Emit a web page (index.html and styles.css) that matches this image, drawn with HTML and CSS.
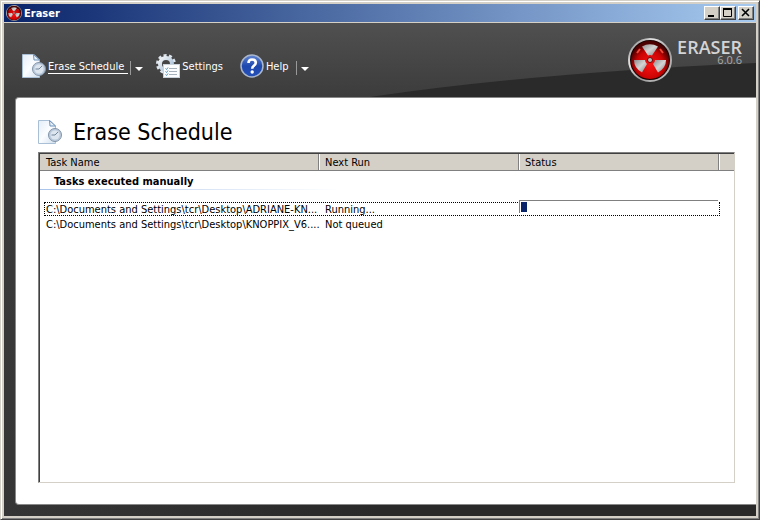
FILE: index.html
```html
<!DOCTYPE html>
<html lang="en">
<head>
  <meta charset="UTF-8" />
  <meta name="viewport" content="width=device-width, initial-scale=1.0"/>
  <title>Eraser</title>
  <link rel="stylesheet" href="styles.css">
</head>
<body>

  <svg class="defs" width="0" height="0" aria-hidden="true">
    <defs>
      <radialGradient id="red" cx="50%" cy="62%" r="55%">
        <stop offset="0" stop-color="#f81414"/>
        <stop offset="0.65" stop-color="#cc0404"/>
        <stop offset="1" stop-color="#4c0000"/>
      </radialGradient>
      <linearGradient id="chrome" x1="0" y1="0" x2="1" y2="1">
        <stop offset="0" stop-color="#777"/>
        <stop offset="0.3" stop-color="#e4e4e4"/>
        <stop offset="0.6" stop-color="#999"/>
        <stop offset="1" stop-color="#ccc"/>
      </linearGradient>
      <linearGradient id="blade" x1="0" y1="0" x2="1" y2="1">
        <stop offset="0" stop-color="#8c8c8c"/>
        <stop offset="0.5" stop-color="#d4d4d4"/>
        <stop offset="1" stop-color="#808080"/>
      </linearGradient>
      <linearGradient id="paper" x1="0" y1="0" x2="1" y2="1">
        <stop offset="0" stop-color="#e4edf7"/>
        <stop offset="0.5" stop-color="#fbfdff"/>
        <stop offset="1" stop-color="#cfdeee"/>
      </linearGradient>
      <linearGradient id="blue" x1="0" y1="0" x2="0" y2="1">
        <stop offset="0" stop-color="#6286d2"/>
        <stop offset="0.5" stop-color="#1f48ae"/>
        <stop offset="1" stop-color="#2450b8"/>
      </linearGradient>
      <linearGradient id="steel" x1="0" y1="0" x2="1" y2="1">
        <stop offset="0" stop-color="#f2f5f8"/>
        <stop offset="1" stop-color="#9db8d4"/>
      </linearGradient>
      <symbol id="logo" viewBox="0 0 44 44">
        <circle cx="22" cy="22" r="21" fill="#1c0000" stroke="url(#chrome)" stroke-width="2"/>
        <circle cx="22" cy="22" r="19" fill="url(#red)"/>
        <g fill="url(#blade)">
          <path d="M20 17.500 L14 8.500 Q22 4 30 8.500 L24 17.500 Q22 16.500 20 17.500Z"/>
          <path d="M17 22 L6 22 Q6 30 14 34.500 L19 26 Q17 24.500 17 22Z"/>
          <path d="M27 22 L38 22 Q38 30 30 34.500 L25 26 Q27 24.500 27 22Z"/>
        </g>
        <circle cx="22" cy="22" r="2.500" fill="#bbb" stroke="#700" stroke-width="1"/>
        <path d="M9 15 L12 11 M32 11 L35 15" stroke="#f04838" stroke-width="2"/>
      </symbol>
      <symbol id="page" viewBox="0 0 24 24">
        <path d="M0.500 0.500 H12 L17.500 6 V23.500 H0.500 Z" fill="url(#paper)" stroke="#a9bfd6"/>
        <path d="M11.500 0.500 L12 6 H17.500 Z" fill="#e8f0f8" stroke="#6f93bb"/>
        <circle cx="17" cy="15" r="6.500" fill="#bccbdc" stroke="#8294a8"/>
        <circle cx="17" cy="15" r="4.500" fill="#dde6ee"/>
        <path d="M17 15 L20 12 M17 15 H13.500" stroke="#71859b" fill="none"/>
      </symbol>
    </defs>
  </svg>

  <div class="window">
    <header class="titlebar">
      <svg class="title-icon"><use href="#logo"/></svg>
      <span class="title">Eraser</span>
      <div class="window-buttons">
        <button type="button" aria-label="Minimize"><svg width="12" height="10"><path d="M2 8h6" stroke="#000" stroke-width="2"/></svg></button>
        <button type="button" aria-label="Maximize"><svg width="12" height="10"><path d="M1.500 0v8.500h8v-8.500" fill="none" stroke="#000"/><path d="M1 1h9" stroke="#000" stroke-width="2"/></svg></button>
        <button type="button" class="close" aria-label="Close"><svg width="12" height="10"><path d="M2 1l7 7M9 1l-7 7" stroke="#000" stroke-width="1.600"/></svg></button>
      </div>
    </header>

    <div class="client">
      <svg class="swoosh" viewBox="0 0 752 74" preserveAspectRatio="none" aria-hidden="true">
        <path d="M366 74 Q530 50 752 40 V74 Z"/>
      </svg>

      <div class="toolbar">
        <nav class="tools">
          <button type="button" class="tool active">
            <svg class="icon"><use href="#page"/></svg>
            <span>Erase Schedule</span>
          </button>
          <button type="button" class="drop" aria-label="Erase Schedule menu"></button>
          <button type="button" class="tool">
            <svg class="icon" viewBox="0 0 24 24">
              <circle cx="10" cy="10" r="8.500" fill="none" stroke="#dde5ed" stroke-width="3" stroke-dasharray="3 2.340"/>
              <circle cx="10" cy="10" r="6" fill="none" stroke="url(#steel)" stroke-width="4"/>
              <rect x="7.500" y="10.500" width="16" height="13" fill="#fafcfd" stroke="#c9d2da"/>
              <path d="M13 14.500h8M13 17.500h8M13 20.500h8" stroke="#a5b0ba"/>
              <path d="M9.500 14.500l1 1 1.500-2M9.500 17.500l1 1 1.500-2M9.500 20.500l1 1 1.500-2" fill="none" stroke="#4f93cc"/>
            </svg>
            <span>Settings</span>
          </button>
          <button type="button" class="tool help">
            <svg class="icon" viewBox="0 0 24 24">
              <circle cx="12" cy="12" r="11" fill="url(#blue)" stroke="#a9b6cc" stroke-width="1.500"/>
              <path d="M8.500 9 Q8.500 5.500 12 5.500 Q15.800 5.500 15.800 8.800 Q15.800 10.600 13.700 11.800 Q12.200 12.700 12.200 14.800" fill="none" stroke="#fff" stroke-width="2.600"/>
              <circle cx="12.200" cy="18" r="1.700" fill="#fff"/>
            </svg>
            <span>Help</span>
          </button>
          <button type="button" class="drop" aria-label="Help menu"></button>
        </nav>
        <div class="brand">
          <svg class="brand-logo"><use href="#logo"/></svg>
          <div class="brand-text">
            <div class="brand-name">ERASER</div>
            <div class="brand-version">6.0.6</div>
          </div>
        </div>
      </div>

      <main class="panel">
        <div class="heading">
          <svg class="icon"><use href="#page"/></svg>
          <h1>Erase Schedule</h1>
        </div>

        <div class="list">
          <table>
            <colgroup>
              <col class="col-name"><col class="col-run"><col class="col-status"><col>
            </colgroup>
            <thead>
              <tr><th>Task Name</th><th>Next Run</th><th>Status</th><th></th></tr>
            </thead>
            <tbody>
              <tr class="group"><th colspan="4"><span>Tasks executed manually</span></th></tr>
              <tr class="selected">
                <td>C:\Documents and Settings\tcr\Desktop\ADRIANE-KN...</td>
                <td>Running...</td>
                <td class="status"><div class="progress" role="progressbar" aria-label="Progress" aria-valuenow="3"><div class="bar" style="width: 3%"></div></div></td>
                <td></td>
              </tr>
              <tr>
                <td>C:\Documents and Settings\tcr\Desktop\KNOPPIX_V6....</td>
                <td>Not queued</td>
                <td></td>
                <td></td>
              </tr>
            </tbody>
          </table>
        </div>
      </main>
    </div>
  </div>

</body>
</html>
```
FILE: styles.css
```css
* { box-sizing: border-box; }

body {
  margin: 0;
  font-family: Tahoma, "DejaVu Sans Condensed", "DejaVu Sans", sans-serif;
  font-size: 11px;
  color: #000;
}

button {
  font: inherit;
  padding: 0;
  border: none;
  background: none;
}

.defs { position: absolute; }

.window {
  display: flex;
  flex-direction: column;
  min-height: 100vh;
  padding: 2px;
  background: #d4d0c8;
  border: 1px solid;
  border-color: #d4d0c8 #404040 #404040 #d4d0c8;
  box-shadow: inset 1px 1px #fff, inset -1px -1px #808080;
}

/* keeps the frame 4px wide inside the bevel */
.titlebar, .client { margin: 0 1px; }

.titlebar {
  display: flex;
  align-items: center;
  height: 18px;
  margin-top: 1px;
  padding: 0 2px;
  gap: 2px;
  background: linear-gradient(90deg, #0a246a, #a6caf0);
}

.title-icon {
  width: 16px;
  height: 16px;
}

.title {
  flex: 1;
  color: #fff;
  font-weight: bold;
}

.window-buttons { display: flex; }

.window-buttons button {
  display: flex;
  align-items: center;
  justify-content: center;
  width: 16px;
  height: 14px;
  background: #d4d0c8;
  border: 1px solid;
  border-color: #fff #404040 #404040 #fff;
  box-shadow: inset -1px -1px #808080;
}

.window-buttons .close { margin-left: 2px; }

.client {
  position: relative;
  flex: 1;
  display: flex;
  flex-direction: column;
  margin-top: 1px;
  margin-bottom: 1px;
  padding: 0 0 11px 11px;
  background: linear-gradient(90deg, transparent, #292929 50%) bottom / 100% 12px no-repeat,
    linear-gradient(#505050, #3c3c3c 74px, #353535);
}

.swoosh {
  position: absolute;
  top: 0;
  left: 0;
  width: 100%;
  height: 74px;
  fill: #2a2a2a;
}

.toolbar {
  position: relative;
  display: flex;
  justify-content: space-between;
  height: 74px;
  padding: 15px 14px 0 7px;
}

.tools {
  display: flex;
  align-items: center;
  height: 56px;
}

.tool {
  display: flex;
  align-items: center;
  gap: 2px;
  color: #fff;
}

.tool span {
  padding-top: 1px;
  border-bottom: 1px solid transparent;
}

.tool.active span {
  padding-right: 4px;
  border-color: #fff;
}

.icon {
  width: 24px;
  height: 24px;
}

.drop {
  width: 14px;
  height: 14px;
  margin: 4px 12px 0 2px;
  border-left: 1px solid #999;
}

.drop::after {
  content: "";
  display: block;
  width: 0;
  margin: 2px 0 0 4px;
  border: 4px solid transparent;
  border-top-color: #fff;
  border-bottom: none;
}

.help { margin-left: 17px; }

.help + .drop { margin-left: 8px; }

.brand {
  display: flex;
  gap: 5px;
}

.brand-logo {
  width: 44px;
  height: 44px;
}

.brand-text {
  color: #d4d4d4;
  font-family: "Open Sans", sans-serif;
  text-align: right;
}

.brand-name {
  font-size: 18px;
  line-height: 18px;
  font-weight: 600;
}

.brand-version {
  font-size: 11px;
  line-height: 8px;
  color: #aaa;
}

.panel {
  position: relative;
  flex: 1;
  display: flex;
  flex-direction: column;
  padding: 20px 21px 21px 22px;
  background: #fff;
  border: 1px solid #888;
  border-right: none;
  border-radius: 4px 0 0 4px;
}

.heading {
  display: flex;
  align-items: center;
  gap: 11px;
  height: 28px;
  margin-bottom: 6px;
}

h1 {
  margin: 0;
  font-size: 23px;
  line-height: 28px;
  font-weight: normal;
}

.list {
  flex: 1;
  border: 1px solid;
  border-color: #808080 #d4d0c8 #d4d0c8 #808080;
  box-shadow: inset 1px 1px #404040;
  padding: 1px 0 0 1px;
}

table {
  width: 100%;
  table-layout: fixed;
  border-collapse: separate;
  border-spacing: 0;
}

.col-name { width: 279px; }
.col-run, .col-status { width: 200px; }

thead th {
  height: 17px;
  padding: 1px 0 0 6px;
  line-height: 15px;
  text-align: left;
  font-weight: normal;
  background: #d4d0c8;
  border: solid #808080;
  border-width: 0 1px 1px 0;
}

thead th + th { box-shadow: inset 1px 0 #fff; }

thead th:last-child { border-right: none; }

.group th {
  height: 31px;
  padding: 2px 0 0;
  text-align: left;
  vertical-align: top;
}

.group span {
  display: block;
  width: 300px;
  height: 17px;
  padding-left: 14px;
  line-height: 17px;
  background: linear-gradient(90deg, #a9c3ea, #fff) bottom / 100% 1px no-repeat;
}

td {
  height: 15px;
  padding: 0 0 0 6px;
  line-height: 15px;
  white-space: nowrap;
}

th:last-child, td:last-child { padding-left: 0; }

/* the focus rectangle hangs off the first cell and spans the three columns */
.selected td:first-child { position: relative; }

.selected td:first-child::after {
  content: "";
  position: absolute;
  box-sizing: border-box;
  top: 0;
  left: 4px;
  width: calc(100% + 397px);
  height: 14px;
  border: 1px dotted #000;
}

.selected .status {
  padding: 0;
  vertical-align: top;
}

.progress {
  position: relative;
  z-index: 1;
  height: 13px;
  margin: -2px 1px 0 0;
  padding: 1px;
  background: #fff;
  border: solid #808080;
  border-width: 1px 0 0 1px;
}

.bar {
  height: 10px;
  background: #0a246a;
}
```
